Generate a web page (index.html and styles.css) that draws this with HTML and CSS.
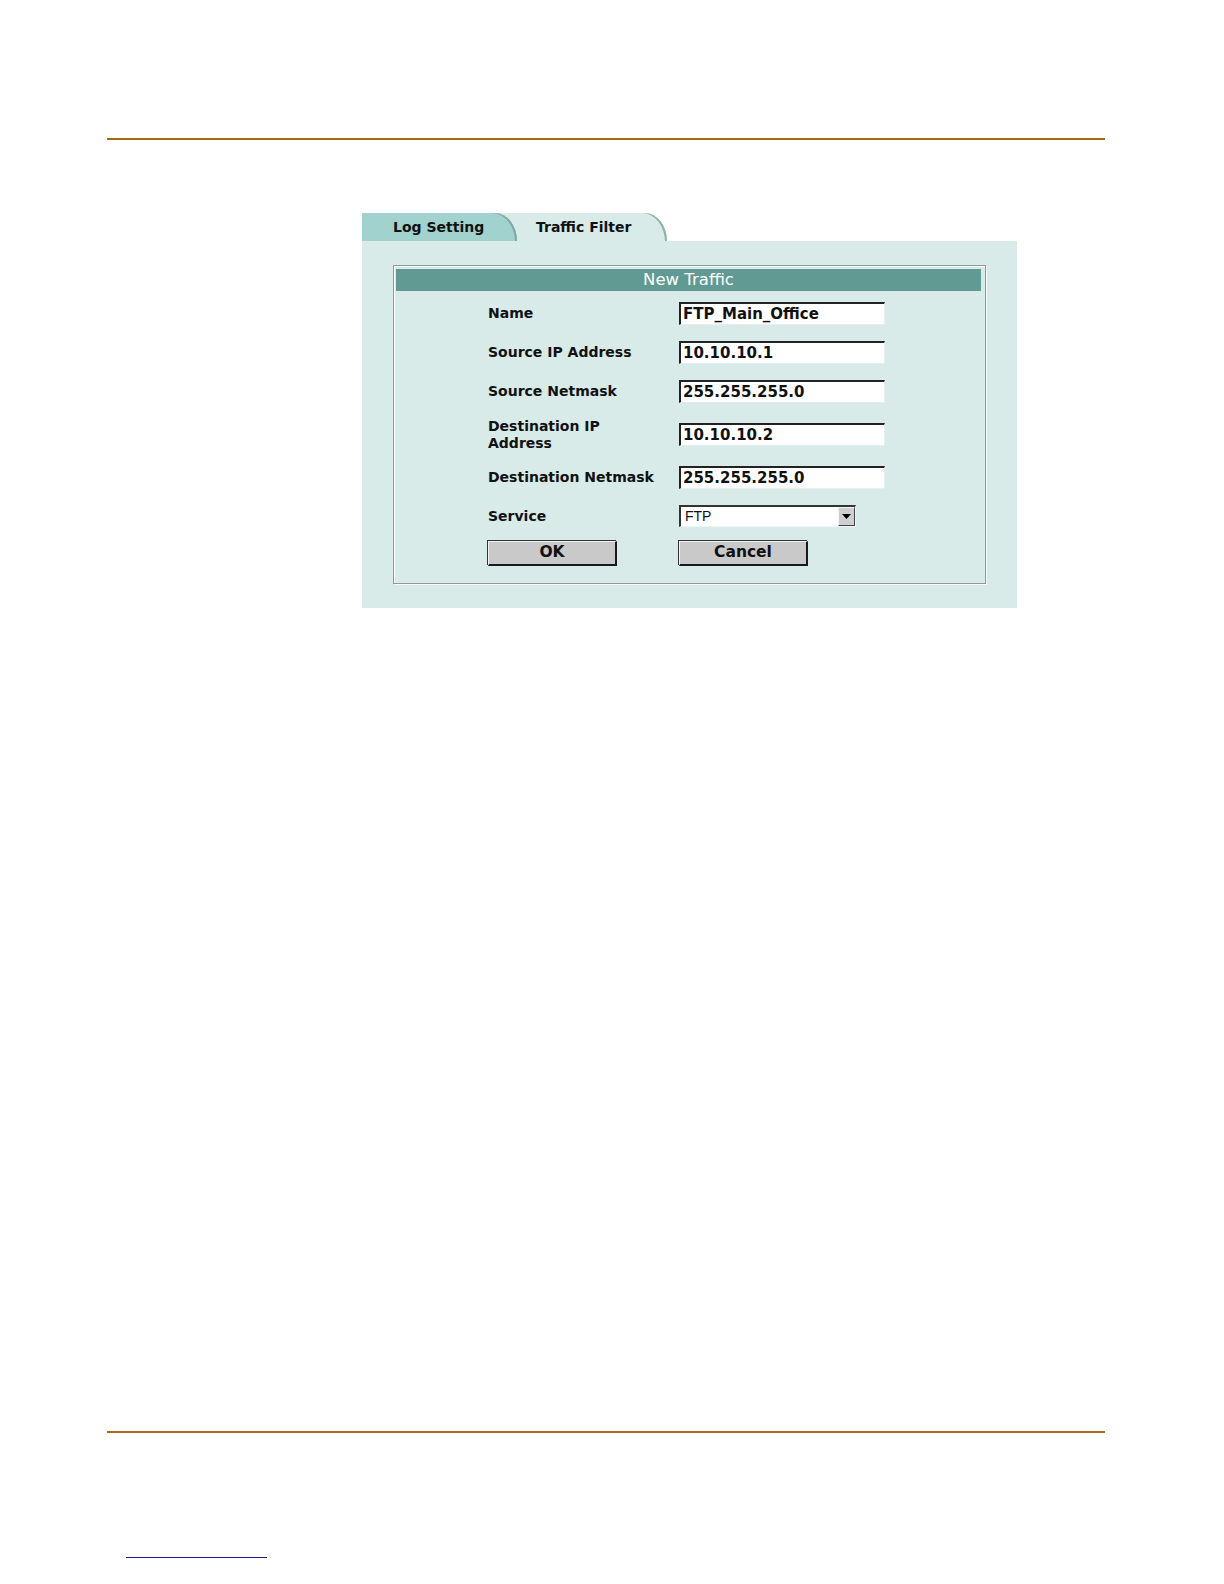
FILE: index.html
```html
<!DOCTYPE html>
<html>
<head>
<meta charset="utf-8">
<link rel="stylesheet" href="styles.css">
</head>
<body>
<div class="page">
  <div class="rule rule-top"></div>
  <div class="window">
    <div class="tabs">
      <div class="tab tab-log">Log Setting</div>
      <div class="tab tab-traffic">Traffic Filter</div>
    </div>
    <div class="panel">
      <div class="box">
        <div class="box-head">New Traffic</div>
        <div class="form">
          <div class="label">Name</div>
          <div class="field"><div class="input">FTP_Main_Office</div></div>
          <div class="label">Source IP Address</div>
          <div class="field"><div class="input">10.10.10.1</div></div>
          <div class="label">Source Netmask</div>
          <div class="field"><div class="input">255.255.255.0</div></div>
          <div class="label two">Destination IP Address</div>
          <div class="field"><div class="input">10.10.10.2</div></div>
          <div class="label">Destination Netmask</div>
          <div class="field"><div class="input">255.255.255.0</div></div>
          <div class="label">Service</div>
          <div class="field">
            <div class="select"><span class="select-text">FTP</span><span class="select-btn"><svg width="9" height="5" viewBox="0 0 9 5"><path d="M0 0H9L4.5 5Z" fill="#000"/></svg></span></div>
          </div>
          <div class="btn-cell"><div class="btn">OK</div></div>
          <div class="btn-cell"><div class="btn">Cancel</div></div>
        </div>
      </div>
    </div>
  </div>
  <div class="spacer"></div>
  <div class="rule rule-bottom"></div>
  <div class="footnote-rule"></div>
</div>
</body>
</html>
```
FILE: styles.css
```css
html, body {
  margin: 0;
  padding: 0;
  background: #ffffff;
  overflow: hidden;
}
.page {
  width: 1224px;
  height: 1570px;
  overflow: hidden;
  padding-top: 138px;
  box-sizing: border-box;
  font-family: "DejaVu Sans", Verdana, sans-serif;
  color: #111;
}
.rule {
  margin-left: 107px;
  width: 998px;
  height: 2px;
  background: #a8681a;
}
.window {
  margin-left: 362px;
  margin-top: 73px;
  width: 655px;
}
.tabs {
  display: flex;
  height: 28px;
  align-items: flex-end;
}
.tab {
  height: 28px;
  box-sizing: border-box;
  font-weight: bold;
  font-size: 14px;
  line-height: 28px;
  border-top-right-radius: 22px 28px;
}
.tab-log {
  width: 155px;
  padding-left: 31px;
  background: #a2d2cd;
  box-shadow: inset -3px 1px 0 -1px #7fa9a5;
  position: relative;
  z-index: 2;
}
.tab-traffic {
  width: 172px;
  margin-left: -22px;
  padding-left: 41px;
  background: #d8ebe9;
  box-shadow: inset -3px 1px 0 -1px #8fb0ad;
  position: relative;
  z-index: 1;
}
.panel {
  background: #d8ebe9;
  padding: 24px 31px 24px 31px;
  height: 367px;
  box-sizing: border-box;
}
.box {
  border: 1px solid #8f9a99;
  box-shadow: inset 1px 1px 0 #ffffff, 1px 1px 0 #f4fbfa;
  padding: 3px 4px 0 2px;
  height: 319px;
  box-sizing: border-box;
}
.box-head {
  background: #609a92;
  color: #ffffff;
  text-align: center;
  height: 22px;
  line-height: 22px;
  font-size: 16.5px;
}
.form {
  display: grid;
  grid-template-columns: 191px 210px;
  column-gap: 0;
  row-gap: 16px;
  margin-top: 11px;
  padding-left: 92px;
}
.label {
  font-weight: bold;
  font-size: 14px;
  line-height: 17px;
  display: flex;
  align-items: center;
  padding-right: 14px;
}
.label.two {
  height: 31px;
}
.field {
  display: flex;
  align-items: center;
}
.input {
  width: 206px;
  height: 23px;
  box-sizing: border-box;
  background: #ffffff;
  border-top: 2px solid #222;
  border-left: 2px solid #222;
  border-bottom: 1px solid #e6eeed;
  border-right: 1px solid #e6eeed;
  font-size: 15px;
  font-weight: bold;
  line-height: 20px;
  padding-left: 2px;
  color: #111;
}
.select {
  width: 177px;
  height: 22px;
  box-sizing: border-box;
  background: #ffffff;
  border-top: 2px solid #333;
  border-left: 2px solid #333;
  border-bottom: 1px solid #f0f4f4;
  border-right: 1px solid #f0f4f4;
  display: flex;
  align-items: stretch;
}
.select-text {
  flex: 1;
  font-family: "Liberation Sans", Arial, sans-serif;
  font-size: 14px;
  line-height: 19px;
  padding-left: 4px;
}
.select-btn {
  width: 17px;
  background: #cfcfcf;
  border-top: 1px solid #f4f4f4;
  border-left: 1px solid #f4f4f4;
  border-right: 1px solid #444;
  border-bottom: 1px solid #444;
  display: flex;
  align-items: center;
  justify-content: center;
  box-sizing: border-box;
}
.btn-cell {
  margin-top: -2px;
}
.btn {
  width: 129px;
  height: 25px;
  box-sizing: border-box;
  background: #c9c9c9;
  border-top: 1px solid #f2f2f2;
  border-left: 1px solid #f2f2f2;
  border-right: 2px solid #1a1a1a;
  border-bottom: 2px solid #1a1a1a;
  box-shadow: -1px -1px 0 #333;
  text-align: center;
  font-weight: bold;
  font-size: 15.5px;
  line-height: 21px;
}
.spacer {
  height: 823px;
}
.footnote-rule {
  margin-left: 126px;
  margin-top: 124px;
  width: 141px;
  height: 1px;
  background: #1a1a8a;
}
```
